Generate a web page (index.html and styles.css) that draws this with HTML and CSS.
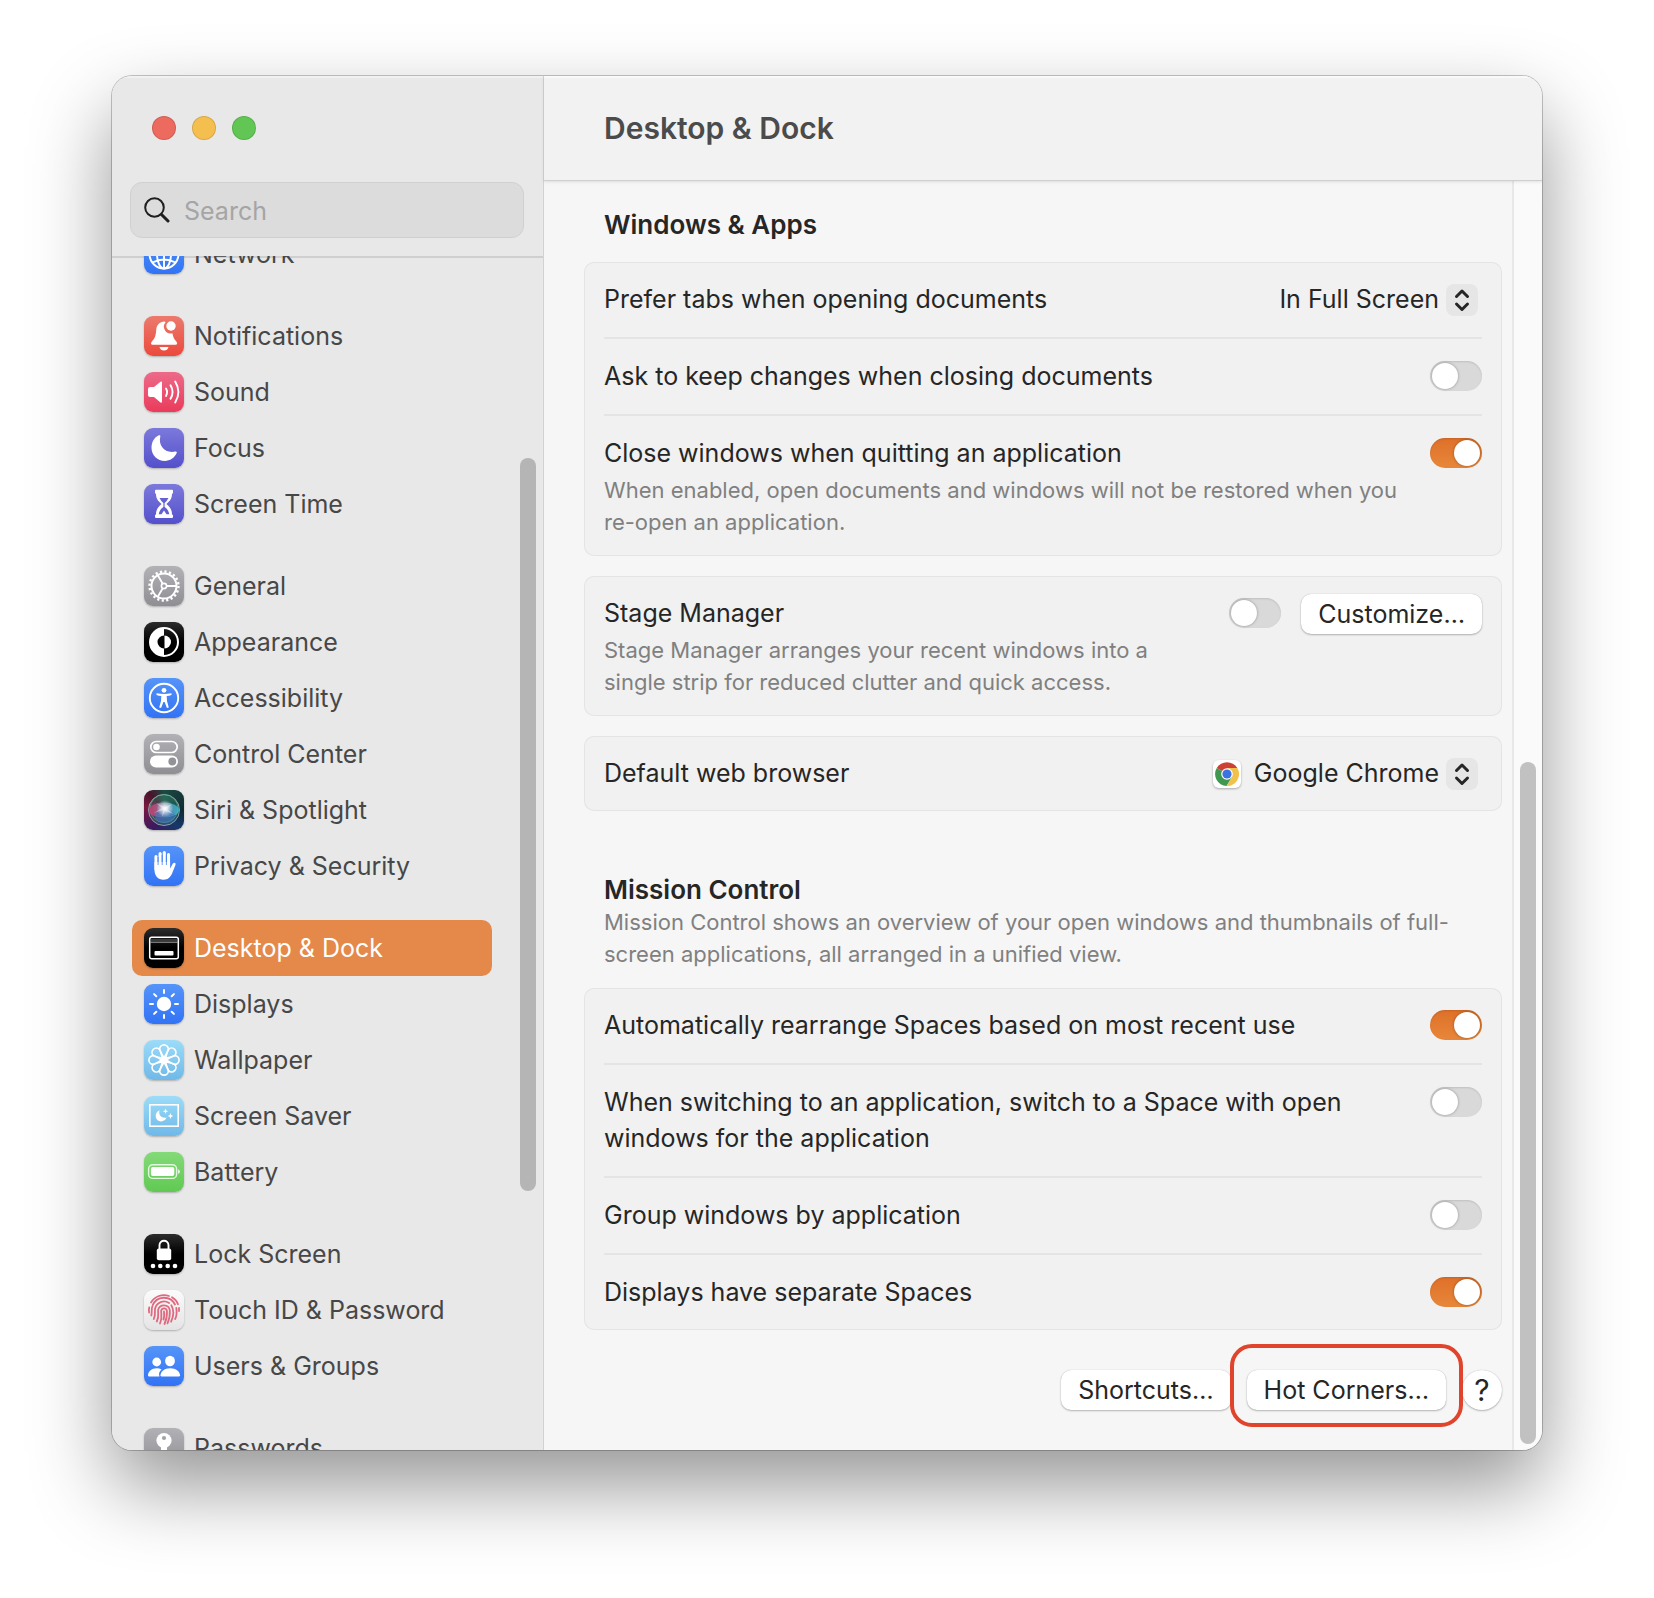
FILE: index.html
```html
<!DOCTYPE html>
<html lang="en">
<head>
<meta charset="utf-8">
<title>Desktop &amp; Dock</title>
<link rel="stylesheet" href="styles.css">
</head>
<body>
<div class="window">
  <aside class="sidebar">
    <div class="lights">
      <button class="light red" aria-label="Close"></button>
      <button class="light yellow" aria-label="Minimize"></button>
      <button class="light green" aria-label="Zoom"></button>
    </div>
    <label class="search">
      <svg width="26" height="26" viewBox="0 0 26 26" fill="none" stroke="#1f1f1f" stroke-linecap="round"><circle cx="10.500" cy="10.500" r="9.300" stroke-width="2"/><path d="M17.500 17.500 24 24" stroke-width="3"/></svg>
      <input type="search" placeholder="Search" aria-label="Search">
    </label>
    <div class="list-area">
      <nav class="list">
        <div class="group">
          <a class="item" href="#"><span class="tile blue"><svg viewBox="0 0 40 40" fill="none" stroke="#fff" stroke-width="1.900"><circle cx="20" cy="20" r="14.500"/><ellipse cx="20" cy="20" rx="7" ry="14.500"/><path d="M20 5v30M5.500 20h29M8.500 11.500q11.500 6 23 0M8.500 28.500q11.500-6 23 0"/></svg></span>Network</a>
        </div>
        <div class="group">
          <a class="item" href="#"><span class="tile coral"><svg viewBox="0 0 40 40" fill="#fff"><path d="M20.500 5.500c-5 0-8 3.600-8.300 8.500-.3 5.500-1.400 8.500-4.300 11.500-1.500 1.500-1 3.300.8 3.300h22.800c1.800 0 2.300-1.800.8-3.300-2.100-2.200-3.300-4.800-3.900-8.300a6.700 6.700 0 0 1-6.800-10.900z"/><path d="M15.500 31h9c-.5 2.400-2.300 3.600-4.500 3.600s-4-1.200-4.500-3.600z"/><circle cx="27" cy="10" r="4.700"/></svg></span>Notifications</a>
          <a class="item" href="#"><span class="tile pink"><svg viewBox="0 0 40 40" fill="#fff"><path d="M4 17q0-2 2-2h4l6.500-5.200q1.500-1 1.500.8v19q0 1.800-1.500.8L10 25H6q-2 0-2-2z"/><path d="M22 16.500q2.200 3.500 0 7.500M26.500 13.200q4.200 6.800 0 13.600M31.200 9.500q6.400 10.500 0 21" fill="none" stroke="#fff" stroke-width="1.900" stroke-linecap="round"/></svg></span>Sound</a>
          <a class="item" href="#"><span class="tile indigo"><svg viewBox="0 0 40 40" fill="#fff"><path d="M14.800 7.300c.9-.4 1.800.1 1.500 1.200-2.300 9.400 5 17.300 15 15 1.300-.3 1.800.6 1.400 1.600C30.500 30 26 33 20.800 33 13.500 33 7.500 27 7.500 19.700c0-5.500 2.700-10.300 7.300-12.400z"/></svg></span>Focus</a>
          <a class="item" href="#"><span class="tile indigo"><svg viewBox="0 0 40 40"><path d="M12 5.800h16q1 0 1 1v2q0 1-1 1c0 4.500-1.500 6.800-5.600 10.300C26.500 23.600 28 26 28 30.500q1 0 1 1V33q0 1-1 1H12q-1 0-1-1v-1.500q0-1 1-1c0-4.500 1.500-6.900 5.600-10.400C13.500 16.600 12 14.300 12 9.800q-1 0-1-1v-2q0-1 1-1z" fill="#fff"/><path d="M15.500 14h9q-1.500 3-3.900 5v4c2.400 1.500 4.200 4.300 4.700 7.300h-2.800L20 26.500l-2.500 3.800h-2.800c.5-3 2.300-5.800 4.700-7.300v-4Q17 17 15.500 14z" fill="#6560d3"/></svg></span>Screen Time</a>
        </div>
        <div class="group">
          <a class="item" href="#"><span class="tile gray"><svg viewBox="0 0 40 40" fill="none" stroke="#fff"><circle cx="20" cy="20" r="12.500" stroke-width="2"/><circle cx="20" cy="20" r="14.500" stroke-width="2.400" stroke-dasharray="2.200 2.355"/><circle cx="20" cy="20" r="2.600" stroke-width="1.600"/><path d="M22.600 20H32M18.700 17.800 13.800 9.200M18.700 22.200l-4.900 8.600" stroke-width="1.800"/></svg></span>General</a>
          <a class="item" href="#"><span class="tile black"><svg viewBox="0 0 40 40"><circle cx="20" cy="20" r="14" fill="none" stroke="#fff" stroke-width="2"/><path d="M20 6a14 14 0 0 0 0 28v-7.500a6.500 6.500 0 0 1 0-13z" fill="#fff"/><path d="M20.500 13.500a6.500 6.500 0 0 1 0 13z" fill="#fff"/></svg></span>Appearance</a>
          <a class="item" href="#"><span class="tile blue"><svg viewBox="0 0 40 40"><circle cx="20" cy="20" r="14.200" fill="none" stroke="#fff" stroke-width="1.900"/><circle cx="20" cy="12.300" r="2.400" fill="#fff"/><path d="M12.500 15.300q7.500 1.500 15 0v1.800q-2.500.8-4.800 1l.3 4.900 1.800 6.500-1.900.6L20.600 24h-1.200l-2.300 6.100-1.900-.6L17 23l.3-4.900q-2.300-.2-4.800-1z" fill="#fff"/></svg></span>Accessibility</a>
          <a class="item" href="#"><span class="tile gray"><svg viewBox="0 0 40 40"><rect x="6.800" y="7.500" width="26.400" height="11" rx="5.500" fill="none" stroke="#fff" stroke-width="1.700"/><circle cx="12.500" cy="13" r="3.300" fill="#fff"/><rect x="6" y="21.500" width="28" height="12" rx="6" fill="#fff"/><circle cx="28.300" cy="27.500" r="3.900" fill="#929297"/></svg></span>Control Center</a>
          <a class="item" href="#"><span class="tile siri"><svg viewBox="0 0 40 40"><defs><radialGradient id="glow"><stop offset="0" stop-color="#fff"/><stop offset=".25" stop-color="#fff" stop-opacity=".8"/><stop offset="1" stop-color="#fff" stop-opacity="0"/></radialGradient><linearGradient id="orb" x1="0" x2="1"><stop offset="0" stop-color="#d93267"/><stop offset=".45" stop-color="#7e7fa8"/><stop offset="1" stop-color="#36bdd8"/></linearGradient></defs><circle cx="20" cy="20" r="15.500" fill="#45b58e" fill-opacity=".28" stroke="#8b9fa5" stroke-width="1"/><circle cx="20" cy="18.500" r="14" fill="none" stroke="#54ad82" stroke-width=".7"/><ellipse cx="20" cy="20" rx="15" ry="7.500" fill="url(#orb)" fill-opacity=".85"/><ellipse cx="21" cy="26" rx="10" ry="7" fill="#4477bd" fill-opacity=".6"/><circle cx="21" cy="18.500" r="8.500" fill="url(#glow)"/><path d="M12 13 21 17l7-3-5 5 7 5-9-3-3 6 1-7-9 3 8-5z" fill="#fff" fill-opacity=".4"/></svg></span>Siri &amp; Spotlight</a>
          <a class="item" href="#"><span class="tile blue"><svg viewBox="0 0 40 40"><g stroke="#fff" stroke-width="3.100" stroke-linecap="round"><path d="M12 10.500V23M16.100 7.500V21M20.300 6.500V21M24.500 8.500V22"/></g><path d="M10.450 17v6.500c0 6.500 3.500 10.300 9 10.300 4.800 0 7.200-2.500 9-7.200l3-7.700c.8-2.200-1.500-3-2.700-1.100l-2.700 4.700V16h-15.600z" fill="#fff"/><path d="M14.050 11v8M18.200 9v10M22.400 9v10" stroke="#4283f6" stroke-width=".8"/></svg></span>Privacy &amp; Security</a>
        </div>
        <div class="group">
          <a class="item selected" href="#" aria-current="page"><span class="tile black"><svg viewBox="0 0 40 40"><rect x="5.700" y="9.200" width="28.600" height="21.600" rx="2" fill="none" stroke="#fff" stroke-width="1.500"/><path d="M6 14.200h28" stroke="#aaa" stroke-width="1"/><path d="M6 12h28" stroke="#777" stroke-width=".8"/><rect x="10.500" y="23" width="19" height="4.500" rx="1" fill="#fff"/></svg></span>Desktop &amp; Dock</a>
          <a class="item" href="#"><span class="tile blue"><svg viewBox="0 0 40 40" stroke="#fff" stroke-width="2" stroke-linecap="round"><circle cx="20" cy="20" r="6.200" fill="#fff"/><path d="M20 6v3M20 31v3M6 20h3M31 20h3M10.100 10.100l2.200 2.200M27.700 27.700l2.200 2.200M29.900 10.100l-2.200 2.200M12.300 27.700l-2.200 2.200"/></svg></span>Displays</a>
          <a class="item" href="#"><span class="tile sky"><svg viewBox="0 0 40 40" fill="none" stroke="#fff" stroke-width="1.600"><g id="petals"><path id="petal" d="M20 18.500C18.500 13.500 15.600 12 15.600 9.300a4.400 4.400 0 0 1 8.800 0c0 2.700-2.900 4.200-4.400 9.200z"/><use href="#petal" transform="rotate(45 20 20)"/><use href="#petal" transform="rotate(90 20 20)"/><use href="#petal" transform="rotate(135 20 20)"/></g><use href="#petals" transform="rotate(180 20 20)"/><circle cx="20" cy="20" r="2.200"/></svg></span>Wallpaper</a>
          <a class="item" href="#"><span class="tile sky"><svg viewBox="0 0 40 40"><rect x="5.800" y="8.800" width="28.400" height="21.400" fill="none" stroke="#fff" stroke-width="1.600"/><path d="M15.500 14.300c-1.300 5 2.200 8.300 7.200 7.300-1.100 2.500-3.100 3.800-5.500 3.800-3.300 0-5.500-2.300-5.500-5.300 0-2.700 1.400-4.900 3.800-5.800zM21.500 12.500l.7 2 2 .7-2 .7-.7 2-.7-2-2-.7 2-.7zM26.500 17l.8 2.200 2.200.8-2.200.8-.8 2.200-.8-2.200-2.200-.8 2.200-.8z" fill="#fff"/></svg></span>Screen Saver</a>
          <a class="item" href="#"><span class="tile lime"><svg viewBox="0 0 40 40"><rect x="4.600" y="12.800" width="28" height="13.600" rx="4.200" fill="none" stroke="#fff" stroke-opacity=".8" stroke-width="1.400"/><rect x="6.900" y="15.100" width="23.400" height="9" rx="2" fill="#fff"/><path d="M34 17.300q2 .6 2 2.300t-2 2.300z" fill="#fff" fill-opacity=".8"/></svg></span>Battery</a>
        </div>
        <div class="group">
          <a class="item" href="#"><span class="tile black"><svg viewBox="0 0 40 40" fill="#fff"><rect x="12.800" y="14.500" width="14.400" height="11.800" rx="2"/><path d="M15.500 15v-3.700c0-6 9-6 9 0V15" fill="none" stroke="#fff" stroke-width="1.900"/><circle cx="9" cy="32" r="2.300"/><circle cx="16.300" cy="32" r="2.300"/><circle cx="23.700" cy="32" r="2.300"/><circle cx="31" cy="32" r="2.300"/></svg></span>Lock Screen</a>
          <a class="item" href="#"><span class="tile white"><svg viewBox="0 0 40 40" fill="none" stroke="#df6a80" stroke-width="1.800" stroke-linecap="round"><path d="M7 12.500A15 15 0 0 1 25 6M28 7.200q4.500 2.600 6 7"/><path d="M5.200 17.500q-.6 2.800-.1 5M7.300 25.500c1-3.500-.3-6.500 1.300-10A12.300 12.300 0 0 1 31 14.500M32.300 18c.8 5 .2 8.500-1.200 11M35 18v3"/><path d="M9.800 29c2.200-5 .6-7.500 1.300-10.500a9.200 9.200 0 0 1 14-5.500M27.300 15.200c2.800 4.500 2.200 11-.2 16.500"/><path d="M12.800 31.500c2.700-5.500.9-9 1.400-12a6 6 0 0 1 11.600.6c.4 4.500-.5 9-2.300 13.300"/><path d="M16 33.500c2.700-6 .9-10 1.200-13a2.900 2.900 0 0 1 5.700.4c.3 4-.5 9-2.400 13.100M20 21.500q.5 5.500-.5 8"/></svg></span>Touch ID &amp; Password</a>
          <a class="item" href="#"><span class="tile blue"><svg viewBox="0 0 40 40" fill="#fff"><circle cx="12.700" cy="16" r="4.400"/><ellipse cx="26" cy="15" rx="4.900" ry="5.300"/><path d="M15.500 30.500H5.200q-1.200 0-1.200-1.200c0-3.500 3.500-7 8.700-7 1.900 0 3.500.4 4.900 1.200-2.200 1.700-3.200 4-2.100 7z"/><path d="M17.700 30.500q-1.200 0-1.200-1.200c0-3.500 3.800-7 9.700-7s9.800 3.500 9.800 7q0 1.200-1.200 1.200z"/></svg></span>Users &amp; Groups</a>
        </div>
        <div class="group">
          <a class="item" href="#"><span class="tile gray"><svg viewBox="0 0 40 40"><circle cx="20" cy="12.500" r="7.600" fill="#fff"/><path d="M17 17h6v14l-3 4-3-3z" fill="#fff"/><circle cx="20" cy="10" r="2.100" fill="#a3a3a7"/></svg></span>Passwords</a>
        </div>
      </nav>
      <div class="track"><div class="thumb"></div></div>
    </div>
  </aside>

  <main class="main">
    <header class="titlebar"><h1>Desktop &amp; Dock</h1></header>
    <div class="body">
      <div class="content">
        <h2>Windows &amp; Apps</h2>
        <section class="card">
          <div class="row">
            <label class="name" for="tabs">Prefer tabs when opening documents</label>
            <span class="popup">
              <select id="tabs"><option>Never</option><option selected>In Full Screen</option><option>Always</option></select>
              <svg class="stepper" viewBox="0 0 32 32"><path d="M10.500 12.500 16 7l5.500 5.500M10.500 20l5.500 5.500 5.500-5.500"/></svg>
            </span>
          </div>
          <div class="row">
            <label class="name" for="keep">Ask to keep changes when closing documents</label>
            <input class="toggle" type="checkbox" role="switch" id="keep">
          </div>
          <div class="row noted">
            <div class="name"><label for="close">Close windows when quitting an application</label>
              <p>When enabled, open documents and windows will not be restored when you re-open an application.</p></div>
            <input class="toggle" type="checkbox" role="switch" id="close" checked>
          </div>
        </section>
        <section class="card">
          <div class="row noted">
            <div class="name"><label for="stage">Stage Manager</label>
              <p>Stage Manager arranges your recent windows into a single strip for reduced clutter and quick access.</p></div>
            <input class="toggle" type="checkbox" role="switch" id="stage">
            <button class="push">Customize…</button>
          </div>
        </section>
        <section class="card">
          <div class="row">
            <label class="name" for="browser">Default web browser</label>
            <svg class="chrome" viewBox="0 0 30 30"><rect x="1" y="1" width="28" height="28" rx="6" fill="#fff"/><path d="M15 15 4.740 8.950A12 12 0 0 1 25.260 8.950z" fill="#cd4135"/><path d="M15 15 4.740 8.950A12 12 0 0 0 14.500 27l5.500-9z" fill="#3f9750"/><path d="M15 9h10.400A12 12 0 0 1 14.500 27l5.700-9z" fill="#f2c14c"/><path d="M15 9h10.400L15 15z" fill="#f2c14c"/><circle cx="15" cy="15" r="5.800" fill="#fff"/><circle cx="15" cy="15" r="4.600" fill="#3b74e0"/></svg>
            <span class="popup">
              <select id="browser"><option selected>Google Chrome</option><option>Safari</option></select>
              <svg class="stepper" viewBox="0 0 32 32"><path d="M10.500 12.500 16 7l5.500 5.500M10.500 20l5.500 5.500 5.500-5.500"/></svg>
            </span>
          </div>
        </section>
        <h2 class="spaced">Mission Control</h2>
        <p class="intro">Mission Control shows an overview of your open windows and thumbnails of full-screen applications, all arranged in a unified view.</p>
        <section class="card">
          <div class="row">
            <label class="name" for="auto">Automatically rearrange Spaces based on most recent use</label>
            <input class="toggle" type="checkbox" role="switch" id="auto" checked>
          </div>
          <div class="row">
            <label class="name" for="switching">When switching to an application, switch to a Space with open windows for the application</label>
            <input class="toggle" type="checkbox" role="switch" id="switching">
          </div>
          <div class="row">
            <label class="name" for="grouping">Group windows by application</label>
            <input class="toggle" type="checkbox" role="switch" id="grouping">
          </div>
          <div class="row">
            <label class="name" for="separate">Displays have separate Spaces</label>
            <input class="toggle" type="checkbox" role="switch" id="separate" checked>
          </div>
        </section>
        <div class="actions">
          <button class="push">Shortcuts…</button>
          <span class="callout"><button class="push">Hot Corners…</button></span>
          <button class="push help" aria-label="Help">?</button>
        </div>
      </div>
      <div class="track"><div class="thumb"></div></div>
    </div>
  </main>
</div>
</body>
</html>
```
FILE: styles.css
```css
* { box-sizing: border-box; }
body {
  margin: 0;
  padding: 76px 112px 148px;
  background: #fff;
  color: #262626;
  font: 25px/36px Inter, "Liberation Sans", sans-serif;
}
h1, h2, p { margin: 0; }
button, input, select { font: inherit; color: inherit; margin: 0; }

.window {
  display: grid;
  grid-template-columns: 431px minmax(0, 1fr);
  border-radius: 20px;
  overflow: hidden;
  background: #f6f6f6;
  box-shadow: 0 0 0 1px rgba(0, 0, 0, .22), 0 36px 80px rgba(0, 0, 0, .42);
}

/* Sidebar */
.sidebar {
  display: flex;
  flex-direction: column;
  background: #e8e8e8;
  box-shadow: inset 0 2px #f1f1f1;
}
.lights { display: flex; gap: 16px; padding: 40px 40px 42px; }
.light {
  width: 24px;
  height: 24px;
  padding: 0;
  border: 1px solid rgba(0, 0, 0, .12);
  border-radius: 50%;
}
.red { background: #ed6a5f; }
.yellow { background: #f5bf4f; }
.green { background: #62c655; }
.search {
  display: flex;
  align-items: center;
  gap: 14px;
  height: 56px;
  margin: 0 19px 18px 18px;
  padding: 0 13px;
  border: 1px solid #d0d0d0;
  border-radius: 12px;
  background: #dcdcdc;
}
.search svg { flex: none; }
.search input { flex: 1; min-width: 0; padding: 2px 0 0; border: 0; outline: 0; background: none; }
.search input::placeholder { color: #a5a5a5; opacity: 1; }
.list-area {
  display: flex;
  flex: 1;
  contain: size;
  overflow: hidden;
  box-shadow: inset 0 2px #cfcfcf;
}
.list {
  display: flex;
  flex: 1;
  flex-direction: column;
  gap: 26px;
  margin-top: -30px;
  padding: 0 28px 0 20px;
}
.item {
  display: flex;
  align-items: center;
  gap: 10px;
  height: 56px;
  padding: 0 12px;
  border-radius: 10px;
  color: #474747;
  text-decoration: none;
  white-space: nowrap;
}
.selected { background: #e4894a; color: #fff; }
.tile {
  flex: none;
  width: 40px;
  height: 40px;
  border-radius: 9px;
  box-shadow: 0 1px 2px rgba(0, 0, 0, .25);
}
.tile svg { display: block; }
.blue { background: linear-gradient(#5594f8, #3273f5); }
.coral { background: linear-gradient(#ec7a6d, #eb4a3c); }
.pink { background: linear-gradient(#ed6a89, #ea3b5b); }
.indigo { background: linear-gradient(#7c79dc, #5450cb); }
.gray { background: linear-gradient(#b2b2b6, #8e8e93); }
.black { background: linear-gradient(#2c2c2c, #000 50%); }
.sky { background: linear-gradient(#9cdcf8, #6fb8e8); }
.lime { background: linear-gradient(#84da78, #60c953); }
.white { background: linear-gradient(#fbfbfb, #e4e4e4); }
.siri { background: conic-gradient(from 0deg, #1c4a42, #102a33 90deg, #17386a 140deg, #3a1a60 210deg, #7d1840 280deg, #48142c 320deg, #1c4a42); }

/* Scroll bars */
.track { flex: none; width: 23px; }
.thumb { width: 16px; border-radius: 8px; background: #b5b5b5; }
.sidebar .thumb { height: 61.4%; margin-top: 202px; }

/* Main pane */
.main {
  display: flex;
  flex-direction: column;
  border-left: 1px solid #d2d2d2;
}
.titlebar {
  position: relative;
  height: 105px;
  padding: 34px 60px;
  border-bottom: 1px solid #cfcfcf;
  background: #f2f2f2;
  box-shadow: inset 0 2px #f9f9f9, 0 1px 3px rgba(0, 0, 0, .1);
}
h1 { color: #4b4b4b; font-size: 30px; font-weight: 600; line-height: 36px; }
.body { display: flex; flex: 1; }
.content { flex: 1; min-width: 0; padding: 26px 10px 40px 40px; }
h2 { padding-left: 20px; font-size: 26px; font-weight: 600; line-height: 36px; }
h2 + .card { margin-top: 19px; }
.spaced { margin-top: 63px; line-height: 32px; }
.intro { padding: 0 20px; margin-bottom: 18px; }
p { color: #808080; font-size: 22px; line-height: 32px; }
.card {
  padding: 0 20px;
  border-radius: 10px;
  background: #f1f1f1;
  box-shadow: inset 0 0 0 1px #e4e4e4;
}
.card + .card { margin-top: 20px; }
.row { display: flex; align-items: flex-start; padding: 19px 0 20px; }
.row + .row { border-top: 2px solid #e4e4e4; }
.noted { padding-bottom: 18px; }
.noted p { margin-top: 3px; }
.name { flex: 1; min-width: 0; padding-right: 28px; }
.toggle {
  flex: none;
  appearance: none;
  width: 52px;
  height: 30px;
  margin-top: 3px;
  padding: 2px;
  border-radius: 15px;
  background: #d9d9d9;
  box-shadow: inset 0 1px 2px rgba(0, 0, 0, .12);
}
.toggle::before {
  content: "";
  display: block;
  width: 26px;
  height: 26px;
  border-radius: 50%;
  background: #fff;
  box-shadow: 0 0 3px rgba(0, 0, 0, .35);
}
.toggle:checked { background: linear-gradient(#df7029, #e7873a); }
.toggle:checked::before { margin-left: auto; }
.popup { position: relative; flex: none; margin-right: 4px; }
.popup select {
  appearance: none;
  display: block;
  height: 36px;
  padding: 0 39px 0 0;
  border: 0;
  background: none;
  text-align-last: right;
}
.stepper {
  position: absolute;
  top: 3px;
  right: 0;
  width: 32px;
  height: 32px;
  border-radius: 8px;
  background: #e6e6e6;
  fill: none;
  stroke: #262626;
  stroke-width: 3;
  stroke-linecap: round;
  stroke-linejoin: round;
  pointer-events: none;
}
.chrome { flex: none; width: 30px; height: 30px; margin: 4px 11px 0 0; filter: drop-shadow(0 1px 1px rgba(0, 0, 0, .3)); }
.push {
  flex: none;
  height: 40px;
  padding: 0 17px;
  border: 0;
  border-radius: 10px;
  background: #fff;
  line-height: 36px;
  box-shadow: 0 0 1px rgba(0, 0, 0, .25), 0 1px 2px rgba(0, 0, 0, .25);
}
.toggle + .push { margin: -1px 0 -3px 20px; }
.actions { display: flex; justify-content: flex-end; gap: 16px; margin-top: 40px; }
.help { width: 40px; padding: 0; border-radius: 50%; font-size: 30px; }
.callout { position: relative; display: flex; }
.callout::after {
  content: "";
  position: absolute;
  inset: -26px -17px -17px;
  border: 4px solid #e0442c;
  border-radius: 22px;
  pointer-events: none;
}
.main .track {
  display: flex;
  flex-direction: column;
  justify-content: flex-end;
  width: 30px;
  padding: 0 6px 6px;
  border-left: 2px solid #e8e8e8;
  background: #fafafa;
}
.main .thumb { height: 54%; background: #c1c1c1; }
```
